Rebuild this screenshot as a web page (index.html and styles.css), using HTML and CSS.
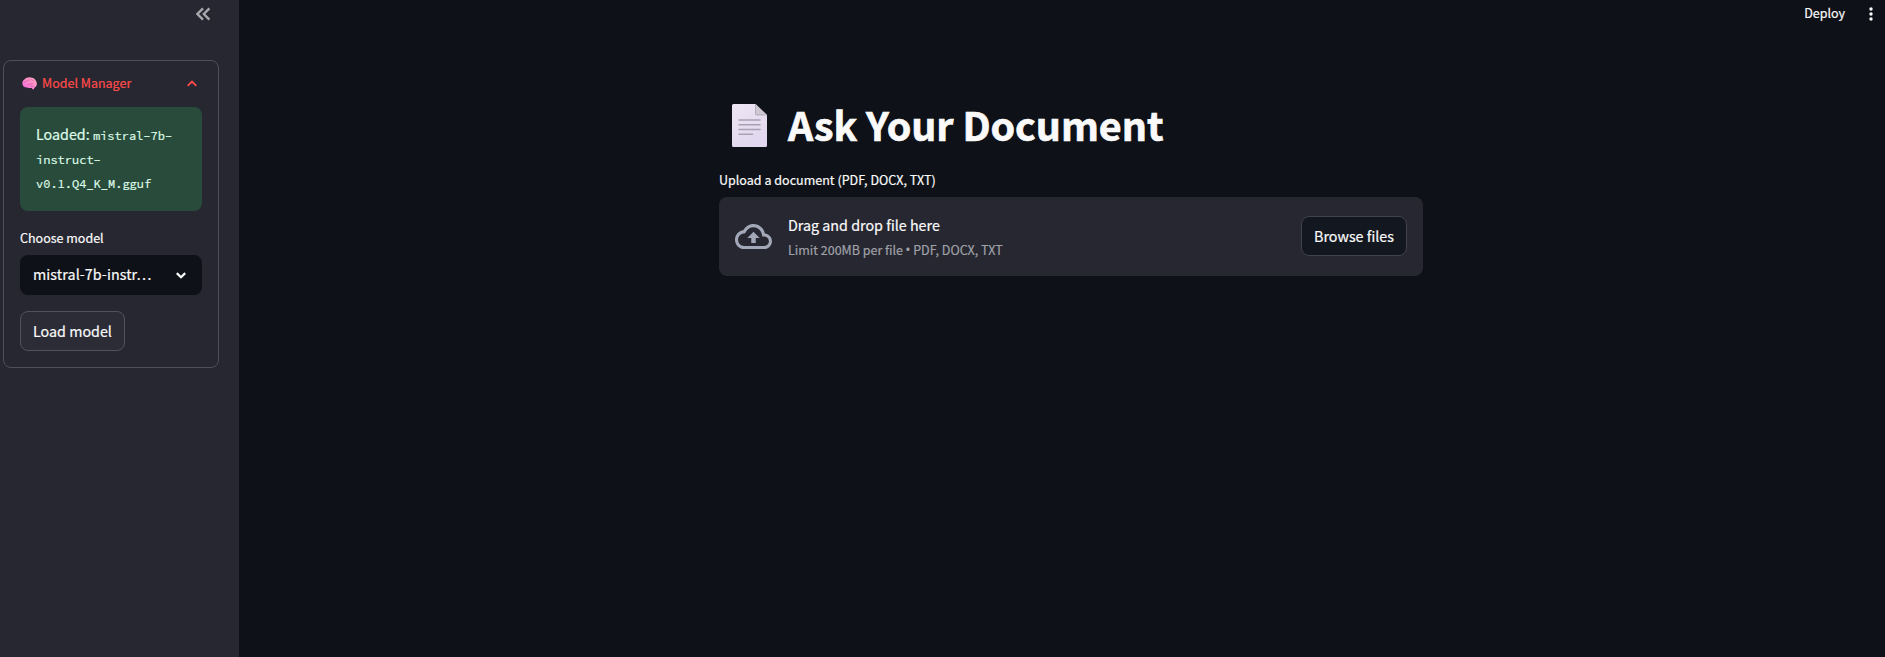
FILE: index.html
```html
<!DOCTYPE html>
<html lang="en">
<head>
<meta charset="utf-8">
<title>Ask Your Document</title>
<link rel="stylesheet" href="styles.css">
</head>
<body>
<div class="app">
  <aside class="sidebar">
    <div class="sidebar-header">
      <svg class="collapse" width="16" height="14" viewBox="0 0 16 14" fill="none" stroke="#a8a8ad" stroke-width="2.400"><path d="M8 1.400 2.400 7 8 12.600M14.400 1.400 8.800 7l5.600 5.600"/></svg>
    </div>
    <section class="expander">
      <div class="summary">
        <svg class="brain" width="15" height="13" viewBox="0 0 14 13" preserveAspectRatio="none"><defs><linearGradient id="brain" x1="1" y1="0" x2="0" y2="1"><stop offset="0" stop-color="#ffa8b4"/><stop offset=".5" stop-color="#fc8ccb"/><stop offset="1" stop-color="#f65fe0"/></linearGradient></defs><path d="M1 8.800C-.2 6.700.2 3.800 2.200 2.400 3.500.8 6 .1 8 .4c2.200 0 4 1.200 4.800 3 1.300 1.600 1.500 4.200.4 5.800-.5.8-1.100 1.200-1.800 1.500l-.2 1.600-1.300-.1-.9-1.200C7.500 11.300 5.800 11 4.800 10.400 3.300 10.700 1.900 10.200 1 8.800Z" fill="url(#brain)"/><path d="M2 5.500c1-.1 1.500-1.300 2.600-1 .5-1.700 2-1.700 2.700-1.200M5 7.500c1.500.3 2-1 3.300-.6 1 .3 1.600-.2 2-1M8.500 2.500c1 .1 1.300 1 2.200 1.200M7.600 9c1.200-.2 2.300.5 3.600-.2" fill="none" stroke="#d957b0" stroke-width=".75"/></svg>
        <span class="summary-text">Model Manager</span>
        <svg class="chevron-up" width="10" height="7" viewBox="0 0 10 7" fill="none" stroke="#ff4b4b" stroke-width="1.800"><path d="M.7 5.900 5 1.500l4.300 4.400"/></svg>
      </div>
      <div class="alert"><span class="loaded">Loaded:</span> <code>mistral-7b-<br>instruct-<br>v0.1.Q4_K_M.gguf</code></div>
      <div class="field-label">Choose model</div>
      <div class="select"><span class="select-text">mistral-7b-instr…</span>
        <svg width="10" height="7" viewBox="0 0 10 7" fill="none" stroke="#fafafa" stroke-width="2.200"><path d="M.8 1.100 5 5.200l4.200-4.100"/></svg>
      </div>
      <button class="button load"><span>Load model</span></button>
    </section>
  </aside>
  <main class="main">
    <header class="toolbar">
      <span class="deploy">Deploy</span>
      <svg width="4" height="14" viewBox="0 0 4 14" fill="#fafafa"><circle cx="2" cy="2" r="1.700"/><circle cx="2" cy="7" r="1.700"/><circle cx="2" cy="12" r="1.700"/></svg>
    </header>
    <div class="block">
      <h1 class="title">
        <svg width="35" height="43" viewBox="0 0 35 43"><defs><linearGradient id="paper" x1="0" y1="0" x2=".5" y2="1"><stop offset="0" stop-color="#eee6f4"/><stop offset="1" stop-color="#e1d7ee"/></linearGradient></defs><path d="M1.500 0h22L35 11v30.500a1.500 1.500 0 0 1-1.500 1.500h-32A1.500 1.500 0 0 1 0 41.500v-40A1.500 1.500 0 0 1 1.500 0Z" fill="url(#paper)"/><path d="M23.500 0 35 11H24.500a1 1 0 0 1-1-1Z" fill="#cdc7d1"/><path d="M23.500 0v10a1 1 0 0 0 1 1H35" fill="none" stroke="#aaa3b1" stroke-width=".8"/><path d="M7 16h21M7 20.800h21M7 25.500h21M7 30.200h13.500" stroke="#a9a1b2" stroke-width="1.600" stroke-linecap="round"/></svg>
        <span class="title-text">Ask Your Document</span>
      </h1>
      <div class="upload-label">Upload a document (PDF, DOCX, TXT)</div>
      <section class="dropzone">
        <svg class="cloud" width="37" height="25" viewBox="0 4 24 16" preserveAspectRatio="none" fill="#a3a8b8"><path d="M19.350 10.040C18.670 6.590 15.640 4 12 4 9.110 4 6.600 5.640 5.350 8.040 2.340 8.360 0 10.910 0 14c0 3.310 2.690 6 6 6h13c2.760 0 5-2.240 5-5 0-2.640-2.050-4.780-4.650-4.960zM19 18H6c-2.210 0-4-1.790-4-4 0-2.050 1.530-3.760 3.560-3.970l1.070-.11.500-.95C8.080 7.140 9.940 6 12 6c2.620 0 4.880 1.860 5.390 4.430l.3 1.500 1.530.11c1.560.1 2.780 1.410 2.780 2.960 0 1.650-1.350 3-3 3zM8 13h2.550v3.200h2.900V13H16l-4-4z"/></svg>
        <div class="drop-copy"><span class="drop-title">Drag and drop file here</span><span class="drop-limit">Limit 200MB per file <span class="bullet">•</span> PDF, DOCX, TXT</span></div>
        <button class="button browse"><span>Browse files</span></button>
      </section>
    </div>
  </main>
</div>
</body>
</html>
```
FILE: styles.css
```css
* { box-sizing: border-box; }
body {
  margin: 0;
  background: #0e1117;
  color: #fafafa;
  font-family: "Source Sans Pro", "Noto Sans CJK SC", sans-serif;
  font-size: 14.3px;
  -webkit-text-stroke: 0.2px;
}
.app { display: flex; height: 657px; overflow: hidden; }
.sidebar { width: 239px; flex: none; background: #262730; padding: 0 20px 0 3px; }
.sidebar-header { height: 60px; display: flex; justify-content: flex-end; padding: 7px 8px 0 0; }
.expander {
  height: 308px;
  border: 1px solid #4e4f57;
  border-radius: 8px;
  padding: 0 16px;
}
.summary { height: 46px; display: flex; align-items: center; padding: 0 5px 2px 2px; color: #ff4b4b; font-size: 12.5px; line-height: 20px; }
.summary-text { margin-left: 5px; }
.chevron-up { margin-left: auto; }
.alert {
  height: 104px;
  border-radius: 8px;
  background: #294b3b;
  color: #dffde9;
  padding: 15px 16px;
  line-height: 24px;
  white-space: nowrap;
}
.alert code { font-family: "Source Code Pro", "Noto Sans Mono CJK SC", "DejaVu Sans Mono", monospace; font-size: 12px; line-height: 18px; }
.field-label { margin-top: 16px; height: 24px; line-height: 22px; font-size: 12.5px; }
.select { margin-top: 4px; height: 40px; border-radius: 8px; background: #0e1117; display: flex; align-items: center; justify-content: space-between; padding: 0 16px 0 13px; line-height: 24px; }
.select-text { padding-bottom: 2px; letter-spacing: 0.08px; }
.button { display: flex; align-items: center; justify-content: center; height: 40px; padding: 0; border: 1px solid #51525a; border-radius: 8px; color: #fafafa; font: inherit; line-height: 24px; white-space: nowrap; }
.load { width: 105px; margin-top: 16px; background: #2b2c36; }
.main { flex: 1; min-width: 0; }
.toolbar { height: 28px; display: flex; align-items: center; justify-content: flex-end; gap: 24px; padding-right: 12px; font-size: 12.5px; line-height: 20px; }
.deploy { padding-bottom: 2px; }
.block { width: 704px; margin: 67px 0 0 480px; }
.title { margin: 0; height: 60px; display: flex; align-items: center; padding-left: 13px; font-size: 39.4px; line-height: 52px; font-weight: 700; white-space: nowrap; -webkit-text-stroke: 0.7px; }
.title-text { margin-left: 21px; padding-bottom: 2px; letter-spacing: -0.03px; }
.upload-label { margin-top: 14px; height: 28px; font-size: 12.5px; line-height: 22px; letter-spacing: 0.02px; }
.dropzone { height: 79px; display: flex; align-items: center; padding: 0 16px; border-radius: 8px; background: #262730; }
.drop-copy { display: flex; flex-direction: column; margin-left: 16px; }
.drop-title { line-height: 26px; }
.drop-limit { color: #a0a1a8; font-size: 12.5px; line-height: 23px; }
.bullet { display: inline-block; width: 4.500px; font-family: "Open Sans", sans-serif; font-size: 14px; line-height: 1; text-indent: -0.5px; }
.browse { width: 106px; margin: 0 0 1px auto; background: #131720; border-color: #41434b; }
.browse span { padding-bottom: 1px; }
```
